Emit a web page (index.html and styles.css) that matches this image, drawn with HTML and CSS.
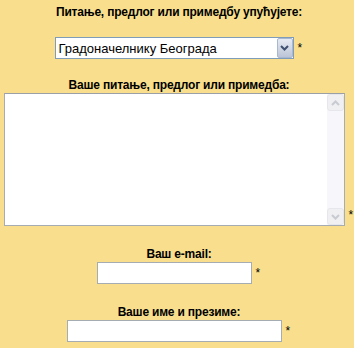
FILE: index.html
```html
<!DOCTYPE html>
<html>
	<head>
		<meta charset="UTF-8">
		<title>Питање</title>
		<link rel="stylesheet" href="styles.css">
	</head>
	<body>
		<form class="ask">
			<div class="caption first">Питање, предлог или примедбу упућујете:</div>
			<div class="row">
				<div class="select">
					<span class="select-text">Градоначелнику Београда</span>
					<span class="select-btn">
						<svg width="9" height="6" viewBox="0 0 9 6"><path d="M1 1 L4.5 4.5 L8 1" fill="none" stroke="#3e4f70" stroke-width="2"/></svg>
					</span>
				</div>
				<span class="req">*</span>
			</div>

			<div class="caption">Ваше питање, предлог или примедба:</div>
			<div class="row">
				<div class="area">
					<div class="area-text"></div>
					<div class="scroll">
						<span class="sbtn">
							<svg width="9" height="6" viewBox="0 0 9 6"><path d="M1 5 L4.5 1.5 L8 5" fill="none" stroke="#c9cbd3" stroke-width="2"/></svg>
						</span>
						<span class="sbtn">
							<svg width="9" height="6" viewBox="0 0 9 6"><path d="M1 1 L4.5 4.5 L8 1" fill="none" stroke="#c9cbd3" stroke-width="2"/></svg>
						</span>
					</div>
				</div>
				<span class="req">*</span>
			</div>

			<div class="caption small">Ваш e-mail:</div>
			<div class="row">
				<input type="text" class="field mail">
				<span class="req">*</span>
			</div>

			<div class="caption small">Ваше име и презиме:</div>
			<div class="row">
				<input type="text" class="field name">
				<span class="req">*</span>
			</div>
		</form>
	</body>
</html>
```

FILE: styles.css
```css
body{
	margin: 0;
	background-color: #f9df8d;
	font-family: "Liberation Sans", Arial, sans-serif;
	color: #000;
}
.ask{
	display: flex;
	flex-direction: column;
	align-items: center;
	padding-left: 4px;
}
.caption{
	font-size: 12px;
	font-weight: bold;
	letter-spacing: -0.2px;
	line-height: 16px;
	margin-top: 18px;
	margin-bottom: 0;
}
.caption.first{
	margin-top: 4px;
	margin-bottom: 17px;
}
.caption.small{
	margin-top: 20px;
}
.row{
	display: flex;
	align-items: flex-end;
	gap: 4px;
}
.req{
	font-size: 12px;
	line-height: 12px;
	width: 6px;
	padding-bottom: 5px;
}
.select{
	width: 239px;
	height: 22px;
	box-sizing: border-box;
	border: 1px solid #7f9db9;
	background-color: #fff;
	display: flex;
	align-items: center;
}
.select-text{
	flex: 1;
	padding-left: 3px;
	font-size: 13px;
}
.select-btn{
	width: 16px;
	height: 20px;
	box-sizing: border-box;
	border: 1px solid #a9b7d1;
	border-radius: 2px;
	background: linear-gradient(#e6eaf3, #bcc5d8);
	display: flex;
	align-items: center;
	justify-content: center;
}
.area{
	width: 341px;
	height: 133px;
	box-sizing: border-box;
	border: 1px solid #a5acb2;
	border-top-color: #9aa0a6;
	background-color: #fff;
	display: flex;
}
.area-text{
	flex: 1;
}
.scroll{
	width: 17px;
	background-color: #f6f6fb;
	display: flex;
	flex-direction: column;
	justify-content: space-between;
}
.sbtn{
	height: 17px;
	box-sizing: border-box;
	border: 1px solid #e6e7ec;
	border-radius: 3px;
	background-color: #f0f0f2;
	display: flex;
	align-items: center;
	justify-content: center;
}
.field{
	height: 22px;
	box-sizing: border-box;
	margin: 0;
	border: 1px solid #a5acb2;
	background-color: #fff;
	font-size: 13px;
}
.mail{
	width: 155px;
}
.name{
	width: 215px;
}
```
